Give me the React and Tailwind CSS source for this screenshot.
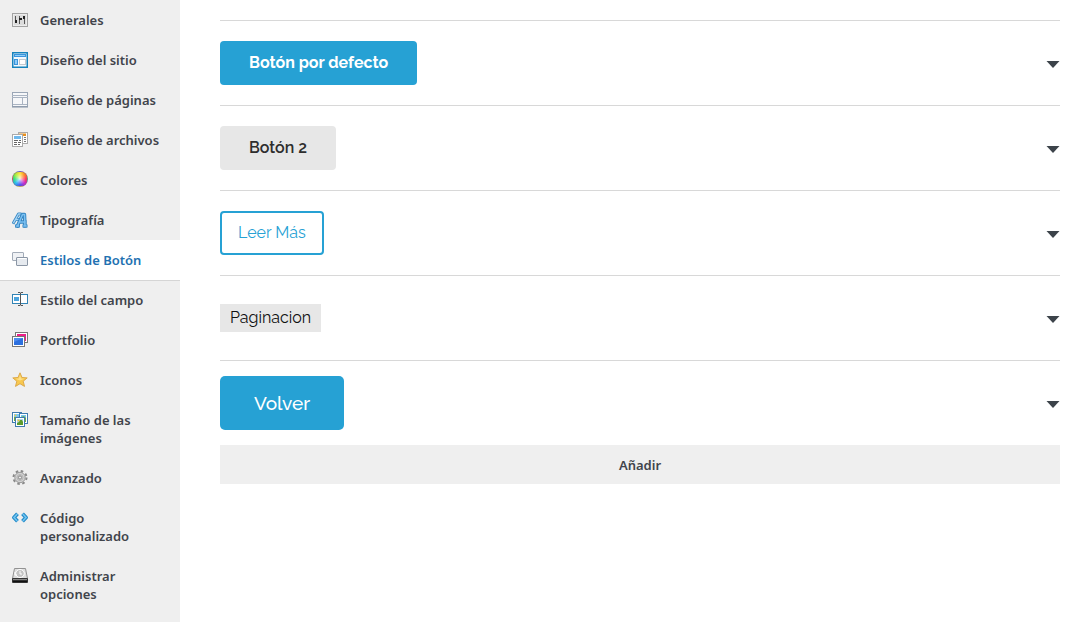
import clsx from "clsx";

// ================= ICONS =================
const Svg = ({ children }) => (
  <svg viewBox="0 0 16 16" className="w-4 h-4 shrink-0 mt-px" fill="none" aria-hidden="true">
    {children}
  </svg>
);

const GeneralIcon = () => (
  <Svg>
    <rect x="0.5" y="1.5" width="15" height="13" fill="#dcdcdc" stroke="#a3a3a3" />
    <rect x="1.5" y="2.5" width="13" height="11" stroke="#ececec" />
    <path d="M3.500 4v7M7.500 4v8M12.500 4v8" stroke="#555" />
    <path d="M3 8h2v3H3zM7 6h3v2H7zM11 4h2v3h-2z" fill="#222" />
  </Svg>
);

const SiteIcon = () => (
  <Svg>
    <rect x="0.75" y="0.75" width="14.5" height="14.5" fill="#f4f9fc" stroke="#1683bd" strokeWidth="1.5" />
    <rect x="2.5" y="2.5" width="11" height="2" fill="#8fcff9" stroke="#3a94dc" />
    <rect x="2.5" y="7.5" width="3" height="5" fill="#8ccbf7" stroke="#3a94dc" />
    <rect x="7.5" y="7.5" width="6" height="5" fill="#fff" stroke="#c4c9ce" />
  </Svg>
);

const PageIcon = () => (
  <Svg>
    <rect x="0.5" y="0.5" width="15" height="14" fill="#f6f7f9" stroke="#9aa6b6" />
    <path d="M0 3.500h16M0 5.500h16M10.500 6v6M1 12.500h14" stroke="#aab4c2" />
    <path d="M0 15h16" stroke="#8492a5" />
  </Svg>
);

const ArchiveIcon = () => (
  <Svg>
    <rect x="6.5" y="0.5" width="9" height="11" fill="#fff" stroke="#aaa" />
    <rect x="7" y="1.5" width="7" height="2.5" fill="#e8901c" />
    <path d="M12 5.500h2M12 7.500h2M12 9.500h2" stroke="#777" />
    <rect x="0.5" y="2.5" width="10" height="12" fill="#fff" stroke="#aaa" />
    <rect x="2" y="4" width="7" height="3" fill="#6fb8ec" />
    <path d="M2 8.500h4M7 8.500h2M2 10.500h3M6 10.500h3M2 12.500h3M6 12.500h2" stroke="#666" />
  </Svg>
);

const ColorIcon = () => (
  <span className="w-4 h-4 shrink-0 rounded-full border border-[#806080]/50 bg-[radial-gradient(circle,#ffffffcc,#ffffff00_60%),conic-gradient(#ffe13a,#ff8a20,#ff2f5e,#c22ad0,#4a50f0,#25b8f5,#2fe07a,#a8f03a,#ffe13a)]" />
);

// Two overlapping slanted letters, a dark outline under a light core
const TypeIcon = () => (
  <Svg>
    <g strokeLinejoin="round" strokeLinecap="square">
      <path d="M1.700 10.500L6.500 2h1.500M4 7.500h3" stroke="#3a88c4" strokeWidth="3" />
      <path d="M1.700 10.500L6.500 2h1.500M4 7.500h3" stroke="#a5d5f5" strokeWidth="1.300" />
      <path d="M4.500 14h2M12 14h2" stroke="#2f82c0" strokeWidth="3" />
      <path d="M5.500 14L10.500 2.500h2L13 14M8 10h5" stroke="#2f82c0" strokeWidth="3.400" />
      <path d="M5.500 14L10.500 2.500h2L13 14M8 10h5M4.500 14h2M12 14h2" stroke="#7cc0f0" strokeWidth="1.600" />
    </g>
  </Svg>
);

const ButtonIcon = () => (
  <Svg>
    <rect x="0.5" y="0.5" width="11" height="8" rx="0.5" fill="#f0f2f5" stroke="#a3acb8" />
    <rect x="4.5" y="5.5" width="11" height="8" rx="0.5" fill="#e6eaef" stroke="#8b96a5" />
    <path d="M5.500 6.500h9" stroke="#fff" />
  </Svg>
);

const FieldIcon = () => (
  <Svg>
    <rect x="0.5" y="2.5" width="15" height="9" fill="#fff" stroke="#3284b5" />
    <rect x="2" y="5" width="5" height="4" fill="#4ba3dc" />
    <path d="M6 0.500h2l0.500 0.500l0.500-0.500h2M8.500 1v12M6 13.500h2l0.500-0.500l0.500 0.500h2" stroke="#555" />
  </Svg>
);

const PortfolioIcon = () => (
  <Svg>
    <rect x="3.5" y="0.5" width="12" height="10" fill="#fff" stroke="#777" />
    <rect x="5" y="2" width="9" height="7" fill="#ee1e88" />
    <rect x="0.5" y="4.5" width="12" height="10" fill="#fff" stroke="#777" />
    <rect x="2" y="6" width="9" height="7" fill="#2d70df" />
    <path d="M2 6h9L2 10z" fill="#4d8df0" />
  </Svg>
);

const StarIcon = () => (
  <Svg>
    <path
      d="M8 0.800l2 4.700l5.200 0.400l-4 3.300l1.300 5.200L8 11.700l-4.500 2.700l1.300-5.200l-4-3.300L6 5.500z"
      fill="#f8c84e"
      stroke="#dca94a"
      strokeLinejoin="round"
    />
    <path d="M8 3l1.200 3.400l3.300 0.300L8 8.500L3.500 6.700l3.300-0.300z" fill="#fde08a" />
  </Svg>
);

const ImagesIcon = () => (
  <Svg>
    <rect x="0.5" y="0.5" width="9" height="10" fill="#fff" stroke="#3f7cb0" />
    <path d="M2 2h6v3H2z" fill="#79c6f4" />
    <path d="M2 5h3v4H2z" fill="#72ad3b" />
    <circle cx="3.500" cy="3.500" r="1" fill="#f6cf3f" />
    <rect x="7.5" y="1.5" width="8" height="10" fill="#fff" stroke="#3f7cb0" />
    <path d="M9 3h5v3H9z" fill="#79c6f4" />
    <path d="M9 5l3-1l2 2v4H9z" fill="#72ad3b" />
    <rect x="3.5" y="5.5" width="9" height="9" fill="#fff" stroke="#3f7cb0" />
    <path d="M5 7h6v6H5z" fill="#a8d8ee" />
    <path d="M5 11l2-1l1-2h2l1 2v3H5z" fill="#5c9b2c" />
    <circle cx="6.500" cy="8.500" r="1" fill="#f3c634" />
  </Svg>
);

const GearIcon = () => (
  <Svg>
    <circle cx="8" cy="7.5" r="6.5" stroke="#8a8a8a" strokeWidth="2" strokeDasharray="2.55 2.55" />
    <circle cx="8" cy="7.5" r="5.2" fill="#d2d2d2" stroke="#999" />
    <circle cx="8" cy="7.5" r="3" stroke="#b4b4b4" />
    <circle cx="8" cy="7.5" r="1.6" fill="#eee" stroke="#858585" />
  </Svg>
);

const CodeIcon = () => (
  <Svg>
    <path d="M5.500 3.700L2 7.500L5.500 11.300M10.500 3.700L14 7.500L10.500 11.300" stroke="#2189c7" strokeWidth="3.800" strokeLinejoin="round" />
    <path d="M5.200 4L2 7.500L5.200 11M10.800 4L14 7.500L10.800 11" stroke="#6fc3f0" strokeWidth="1.700" />
  </Svg>
);

const DriveIcon = () => (
  <Svg>
    <path d="M2.500 0.500h11l2 10H0.500z" fill="#dedede" stroke="#929292" strokeLinejoin="round" />
    <ellipse cx="8" cy="5.500" rx="4.300" ry="4" fill="#c4c4c4" stroke="#fff" />
    <path d="M8 3v3h2M3 4v3h2" stroke="#fff" />
    <rect y="10" width="16" height="5" rx="1" fill="#333" />
    <path d="M1 11.500h14" stroke="#888" />
    <path d="M1 13.500h14" stroke="#111" />
  </Svg>
);

// ================= DATA =================
const menu = [
  { label: "Generales", icon: GeneralIcon },
  { label: "Diseño del sitio", icon: SiteIcon },
  { label: "Diseño de páginas", icon: PageIcon },
  { label: "Diseño de archivos", icon: ArchiveIcon },
  { label: "Colores", icon: ColorIcon },
  { label: "Tipografía", icon: TypeIcon },
  { label: "Estilos de Botón", icon: ButtonIcon, active: true },
  { label: "Estilo del campo", icon: FieldIcon },
  { label: "Portfolio", icon: PortfolioIcon },
  { label: "Iconos", icon: StarIcon },
  { label: "Tamaño de las imágenes", icon: ImagesIcon },
  { label: "Avanzado", icon: GearIcon },
  { label: "Código personalizado", icon: CodeIcon },
  { label: "Administrar opciones", icon: DriveIcon },
];

const buttonStyles = [
  { label: "Botón por defecto", className: "h-11 px-[29px] rounded bg-[#26a1d4] text-white text-base font-bold" },
  { label: "Botón 2", className: "h-11 px-[29px] rounded bg-[#e7e7e7] text-[#2e2e2e] text-base font-semibold" },
  { label: "Leer Más", className: "h-11 px-4 rounded border-2 border-[#26a1d4] bg-white text-[#26a1d4] text-base font-normal" },
  { label: "Paginacion", className: "h-7 px-2.5 bg-[#e7e7e7] text-[#111] text-base font-normal" },
  { label: "Volver", className: "h-[54px] px-[34px] rounded-[5px] bg-[#26a1d4] text-white text-[19px] font-medium" },
];

export default function App() {
  return (
    <div className="flex min-h-screen bg-white font-['Noto_Sans',sans-serif] text-[13px] leading-[18px] font-semibold text-[#41444b]">
      {/* Sidebar */}
      <nav className="w-[180px] shrink-0 bg-[#efefef]">
        {menu.map(({ label, icon: Icon, active }) => (
          <a
            key={label}
            href="#"
            aria-current={active ? "page" : undefined}
            className={clsx(
              "flex items-start gap-3 px-3 py-[11px]",
              active && "bg-white text-[#2271b1] shadow-[0_1px_0_#d5d5d5]"
            )}
          >
            <Icon />
            {label}
          </a>
        ))}
      </nav>

      {/* Button styles */}
      <main className="flex-1 pt-5 pl-10 pr-[27px]">
        {buttonStyles.map(({ label, className }) => (
          <div key={label} className="flex items-center justify-between h-[85px] border-t border-[#d8d8d8]">
            <button type="button" className={clsx("font-['Raleway','Lato',sans-serif] leading-6", className)}>
              {label}
            </button>
            <button type="button" aria-label={`Abrir ${label}`} className="pt-0.5">
              <svg viewBox="0 0 14 7" className="w-3.5 h-[7px]" aria-hidden="true">
                <path d="M0.500 0h13L7 7z" fill="#3c434a" />
              </svg>
            </button>
          </div>
        ))}
        <button type="button" className="w-full h-[39px] bg-[#efefef]">
          Añadir
        </button>
      </main>
    </div>
  );
}
